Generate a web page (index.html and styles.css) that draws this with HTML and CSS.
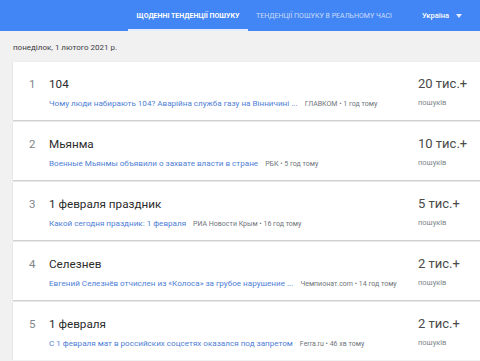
FILE: index.html
```html
<!DOCTYPE html>
<html lang="uk">
<head>
<meta charset="utf-8">
<link rel="stylesheet" href="styles.css">
</head>
<body>
<header class="topbar">
  <nav class="tabs">
    <a class="tab tab-active">Щоденні тенденції пошуку</a>
    <a class="tab">Тенденції пошуку в реальному часі</a>
  </nav>
  <div class="country">Україна <span class="caret"></span></div>
</header>
<main class="content">
  <div class="date">понеділок, 1 лютого 2021 р.</div>
  <ul class="list">
    <li class="card">
      <div class="rank">1</div>
      <div class="body">
        <div class="title">104</div>
        <div class="meta"><a class="story">Чому люди набирають 104? Аварійна служба газу на Вінничині ...</a><span class="source">ГЛАВКОМ • 1 год тому</span></div>
      </div>
      <div class="count"><div class="num">20 тис.+</div><div class="unit">пошуків</div></div>
    </li>
    <li class="card">
      <div class="rank">2</div>
      <div class="body">
        <div class="title">Мьянма</div>
        <div class="meta"><a class="story">Военные Мьянмы объявили о захвате власти в стране</a><span class="source">РБК • 5 год тому</span></div>
      </div>
      <div class="count"><div class="num">10 тис.+</div><div class="unit">пошуків</div></div>
    </li>
    <li class="card">
      <div class="rank">3</div>
      <div class="body">
        <div class="title">1 февраля праздник</div>
        <div class="meta"><a class="story">Какой сегодня праздник: 1 февраля</a><span class="source">РИА Новости Крым • 16 год тому</span></div>
      </div>
      <div class="count"><div class="num">5 тис.+</div><div class="unit">пошуків</div></div>
    </li>
    <li class="card">
      <div class="rank">4</div>
      <div class="body">
        <div class="title">Селезнев</div>
        <div class="meta"><a class="story">Евгений Селезнёв отчислен из «Колоса» за грубое нарушение ...</a><span class="source">Чемпионат.com • 14 год тому</span></div>
      </div>
      <div class="count"><div class="num">2 тис.+</div><div class="unit">пошуків</div></div>
    </li>
    <li class="card">
      <div class="rank">5</div>
      <div class="body">
        <div class="title">1 февраля</div>
        <div class="meta"><a class="story">С 1 февраля мат в российских соцсетях оказался под запретом</a><span class="source">Ferra.ru • 46 хв тому</span></div>
      </div>
      <div class="count"><div class="num">2 тис.+</div><div class="unit">пошуків</div></div>
    </li>
  </ul>
</main>
</body>
</html>
```
FILE: styles.css
```css
* { box-sizing: border-box; }
html, body { margin: 0; padding: 0; }
body {
  background: #f1f1f1;
  font-family: Roboto, "Noto Sans", Arial, sans-serif;
  color: #212121;
  width: 480px;
  overflow: hidden;
}
.topbar {
  height: 31px;
  background: #4285f4;
  display: flex;
  align-items: stretch;
  justify-content: flex-end;
  padding-right: 18px;
}
.tabs { display: flex; align-items: stretch; }
.tab {
  display: flex;
  align-items: center;
  justify-content: center;
  white-space: nowrap;
  text-transform: uppercase;
  font-size: 7px;
  font-weight: 400;
  color: rgba(255,255,255,0.72);
  padding: 2px 8px 0;
  border-bottom: 2px solid transparent;
}
.tab-active {
  width: 120px;
  color: #fff;
  font-weight: 700;
  border-bottom-color: #e3ecfd;
}
.country {
  display: flex;
  align-items: center;
  margin-left: 22px;
  font-size: 7.5px;
  font-weight: 500;
  color: #fff;
  gap: 7px;
}
.caret {
  width: 0; height: 0;
  border-left: 3.5px solid transparent;
  border-right: 3.5px solid transparent;
  border-top: 4px solid rgba(255,255,255,0.85);
}
.content { padding-left: 13px; }
.date {
  height: 31px;
  display: flex;
  align-items: center;
  font-size: 8px;
  color: #3c4043;
  padding-top: 1px;
}
.list { list-style: none; margin: 0; padding: 0; display: flex; flex-direction: column; gap: 2px; }
.card {
  height: 58px;
  background: #fff;
  box-shadow: 0 1px 1px rgba(0,0,0,0.12), 0 0 1px rgba(0,0,0,0.1);
  display: flex;
  align-items: flex-start;
  padding-top: 14px;
}
.rank {
  width: 36px;
  padding-left: 16px;
  font-size: 11.5px;
  line-height: 16px;
  color: #80868b;
}
.body { flex: 1; min-width: 0; }
.title { font-size: 11.7px; line-height: 16px; color: #2b2b2b; }
.meta { margin-top: 5px; font-size: 8.1px; line-height: 12px; white-space: nowrap; }
.story { color: #4f80d6; margin-right: 7px; }
.source { color: #70757a; font-size: 7px; }
.count { width: 62px; }
.num { font-size: 13px; line-height: 16px; color: #4a4a4a; }
.unit { margin-top: 5px; font-size: 7.5px; line-height: 12px; color: #80868b; }
```
